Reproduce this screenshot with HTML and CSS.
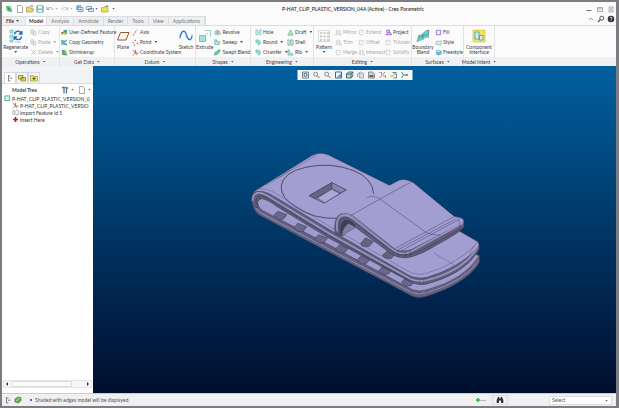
FILE: index.html
```html
<!DOCTYPE html>
<html lang="en">
<head>
<meta charset="utf-8">
<title>Creo Parametric</title>
<link rel="stylesheet" href="styles.css">
</head>
<body>
<svg class="defs" aria-hidden="true">
  <symbol id="page" viewBox="0 0 8 8"><path d="M1.500.5h3.500l1.500 1.500v5.500h-5z" fill="#fff" stroke="#888" stroke-width=".7"/></symbol>
  <symbol id="logo" viewBox="0 0 8 8"><path d="M1 1h4l2 2v4H3L1 5z" fill="#9ed6a4"/><path d="M1 1l6 6M2 4h4M4 1v5" stroke="#2f9b57" stroke-width=".9"/></symbol>
  <symbol id="open" viewBox="0 0 8 8"><path d="M.5 7V2h2.500l1 1h2v1H8L6.500 7z" fill="#e9d37a" stroke="#a98e2f" stroke-width=".6"/><path d="M4 1.500l2-.8 1.200 1" fill="none" stroke="#555" stroke-width=".7"/></symbol>
  <symbol id="save" viewBox="0 0 8 8"><rect x=".7" y=".7" width="6.600" height="6.600" rx=".8" fill="#7fc4bc" stroke="#5a9aa0" stroke-width=".6"/><path d="M2 1h4v2.500H2zM2 5h4v2H2z" fill="#eef9f7"/></symbol>
  <symbol id="undo" viewBox="0 0 8 8"><path d="M1 2v2.500h2.500M1.200 4.200C2.500 2 6.500 2 6.800 5" fill="none" stroke="#9aa6b8" stroke-width="1"/></symbol>
  <symbol id="redo" viewBox="0 0 8 8"><path d="M7 2v2.500H4.500M6.800 4.200C5.500 2 1.500 2 1.200 5" fill="none" stroke="#bcc3cd" stroke-width="1"/></symbol>
  <symbol id="regen" viewBox="0 0 8 8"><path d="M2 2.500h5v4H2z" fill="#d5e6f3" stroke="#5f93b8" stroke-width=".8"/><path d="M1 5V1h4.500M3.500 4.500h2" fill="none" stroke="#2467a4" stroke-width=".9"/></symbol>
  <symbol id="windows" viewBox="0 0 8 8"><path d="M.5 1.500h5v3h-5zM2.500 3.500h5v3h-5z" fill="#e9f0f6" stroke="#6c8ba6" stroke-width=".8"/></symbol>
  <symbol id="folder" viewBox="0 0 8 8"><path d="M.5 7V2.500h2l1-1H7V7z" fill="#f0de4b" stroke="#a89b35" stroke-width=".6"/><path d="M4.500 2l2.500-1.500" stroke="#777"/></symbol>
  <symbol id="regenbig" viewBox="0 0 14 14"><path d="M1 1h3v3H1zM1 6h3v3H1zM1 11h3v2H1z" fill="#b8ead9" stroke="#51b5a0" stroke-width=".6"/><path d="M5.500 5.500C6 1.500 11 1 12 4.500M12.800 2v3h-3M12.500 7.500c-.5 4-5.500 4-6.500 1M5.200 11V8h3" fill="none" stroke="#1f68c2" stroke-width="1.400"/><path d="M6 13h6" stroke="#aaa" stroke-width=".7"/></symbol>
  <symbol id="copy" viewBox="0 0 8 8"><path d="M1 1h3v4H1zM3.500 3h3v4h-3z" fill="#f4f4f4" stroke="#bbb" stroke-width=".8"/></symbol>
  <symbol id="cross" viewBox="0 0 8 8"><path d="M1.500 1.500l5 5M6.500 1.500l-5 5" stroke="#b5b5b5" stroke-width=".9"/></symbol>
  <symbol id="udf" viewBox="0 0 8 8"><path d="M3 1h4v5H3z" fill="#4bb8a6"/><path d="M1 3h4v4H1z" fill="#f0c95d"/><path d="M0 5l3-1.500" stroke="#333"/><path d="M4 2h2v2H4z" fill="#2474a4"/></symbol>
  <symbol id="geom" viewBox="0 0 8 8"><path d="M1 1l5 1-3 2 4 3-5-.5z" fill="#54c9bd"/><path d="M7 1L3 4l4 3M1 1v6" fill="none" stroke="#176f91" stroke-width=".9"/></symbol>
  <symbol id="shrink" viewBox="0 0 8 8"><path d="M.5 1h6.500v6H.5z" fill="#f3dc5e"/><path d="M1 1h3l3 5-4 1z" fill="#49bda8"/><path d="M2 1v5l5 1" fill="none" stroke="#37758f" stroke-width=".8"/></symbol>
  <symbol id="plane" viewBox="0 0 14 14"><path d="M4.500 3.500H13l-3 7.500H1.500z" fill="#fffaf6" stroke="#98562f" stroke-width="1"/></symbol>
  <symbol id="axis" viewBox="0 0 8 8"><path d="M1.500 7.500l1-1.800M3 5l1.500-2.700M5 1.500L5.600.5" stroke="#a45b38" stroke-width=".9"/></symbol>
  <symbol id="points" viewBox="0 0 8 8"><path d="M3 1.500h1.300M.8 4h1.300M5.500 5h1.300M2 7h1.300" stroke="#a3532b" stroke-width="1.300"/></symbol>
  <symbol id="csys" viewBox="0 0 8 8"><path d="M1 1l3 3.500L1 7.500M4 4.500h3.500M4 1v3.500l2 2.500" fill="none" stroke="#a5582f" stroke-width=".9"/></symbol>
  <symbol id="sketch" viewBox="0 0 14 14"><path d="M1 9C2.500 0 6 1 7.500 6s4 7 5.500 1" fill="none" stroke="#2472d8" stroke-width="1.300"/><path d="M1 10V6M7 8V4M13 9V5" stroke="#85aae0" stroke-width=".8"/></symbol>
  <symbol id="extrude" viewBox="0 0 14 14"><path d="M1.500 6.500h6v6h-6z" fill="#9ce5d9" stroke="#77c9bf"/><path d="M7 1.500h5.500V8M8 6l2-2" fill="none" stroke="#8fc8bf" stroke-width=".9"/></symbol>
  <symbol id="revolve" viewBox="0 0 8 8"><path d="M1 6V3l2-1v4zM5 2l2 1v3H5z" fill="#d4eee9" stroke="#6e9b98" stroke-width=".7"/><path d="M4 .5v7" stroke="#778" stroke-width=".6"/></symbol>
  <symbol id="sweep" viewBox="0 0 8 8"><path d="M1 1v5h5V3H3V1z" fill="#d7f4ed" stroke="#409a90" stroke-width=".8"/></symbol>
  <symbol id="blend" viewBox="0 0 8 8"><path d="M.5 7L1 4l5-3.500L7.500 2 4 6z" fill="#63c8ae" stroke="#389779" stroke-width=".6"/></symbol>
  <symbol id="hole" viewBox="0 0 8 8"><path d="M1 1v5.500h6V1H5v3H3V1z" fill="#c8eeee" stroke="#73bcb7" stroke-width=".7"/></symbol>
  <symbol id="round" viewBox="0 0 8 8"><path d="M1 1h2c2 0 3.500 2 3.500 4L4 7C4 5 3 4 1 4z" fill="#9ae0d0" stroke="#58ac9b" stroke-width=".6"/></symbol>
  <symbol id="draft" viewBox="0 0 8 8"><path d="M1 7l3-6 1.500 3L7 7z" fill="#b7e7ae" stroke="#57b692" stroke-width=".8"/></symbol>
  <symbol id="shell" viewBox="0 0 8 8"><path d="M1 1h2.500v6H1zM4.500 1H7v6H4.500z" fill="#d5efe8" stroke="#70a89f" stroke-width=".8"/></symbol>
  <symbol id="rib" viewBox="0 0 8 8"><path d="M1 1v6h6L6 5H3V1z" fill="#a4dfd5" stroke="#70b5ac" stroke-width=".7"/></symbol>
  <symbol id="pattern" viewBox="0 0 14 14"><path d="M1.500 1.500h11v11h-11z" fill="#fafafa" stroke="#ccc" stroke-width=".7"/><path d="M3 4h2M6.500 4h2M10 4h2M3 7.500h2M6.500 7.500h2M10 7.500h2M3 11h2M6.500 11h2M10 11h2" stroke="#bbb" stroke-width="1.600"/></symbol>
  <symbol id="mirror" viewBox="0 0 8 8"><path d="M2.500 1L1 6.500h2.500zM5 1v6h2.500z" fill="none" stroke="#c8c8c8" stroke-width=".8"/></symbol>
  <symbol id="corner" viewBox="0 0 8 8"><path d="M6.500 1.500h-5v5h5M4 3.500h3" fill="none" stroke="#c5c5c5" stroke-width=".8"/></symbol>
  <symbol id="project" viewBox="0 0 8 8"><path d="M1 6.500h6.500L6 4H3zM2 4V1.500l3-.5.500 2.500" fill="#e1caf4" stroke="#9752d1" stroke-width=".9"/></symbol>
  <symbol id="boundary" viewBox="0 0 14 14"><path d="M1 13l2-7c3 2 4-4 10-5l-1 8c-3-1-6 3-11 4z" fill="#62d6cd"/><path d="M1 13l2-7c3 2 4-4 10-5l-1 8M7 5v6M3 9l9-4" fill="none" stroke="#557f80" stroke-width=".7"/></symbol>
  <symbol id="fill" viewBox="0 0 8 8"><path d="M1.500 1.500h5v5h-5z" fill="#f0eaff" stroke="#805fd4" stroke-width=".9"/></symbol>
  <symbol id="style" viewBox="0 0 8 8"><path d="M.5 6l2-4 2 1 2.500-1v5z" fill="#dbeff3" stroke="#8eafb9" stroke-width=".8"/></symbol>
  <symbol id="free" viewBox="0 0 8 8"><path d="M1 2l3-1 3.500 1v4L4 7.500 1 6z" fill="#64b9dc"/><path d="M2 2.500l2-.8 2 .8-2 1z" fill="#dff4fb"/></symbol>
  <symbol id="component" viewBox="0 0 14 14"><path d="M1 1h12v12H1z" fill="#f1e45b" stroke="#c6b946" stroke-width=".6"/><path d="M3 3h4v7H3zM7.500 6.500H11V11H7.500z" fill="#d1f0ed" stroke="#479e9a" stroke-width=".8"/></symbol>
  <symbol id="tree" viewBox="0 0 8 8"><path d="M2.500 1v6M2.500 2h2M4 4.200h2.500M2.500 7h2" fill="none" stroke="#777" stroke-width=".9"/></symbol>
  <symbol id="layers" viewBox="0 0 8 8"><path d="M.5 1.500h4.500v3.500H.5zM3 3.500h4.500V7H3z" fill="#e8df58" stroke="#797326" stroke-width=".7"/></symbol>
  <symbol id="star" viewBox="0 0 8 8"><path d="M.5 7V1.500h3l.5 1h3.500V7z" fill="#eee867" stroke="#8c873c" stroke-width=".6"/><path d="M4 3v3M2.500 4.500h3" stroke="#635e18" stroke-width="1.200"/></symbol>
  <symbol id="hammer" viewBox="0 0 8 8"><path d="M1 1.500h3.500M3 2v5.500M5.500 1v6.500" fill="none" stroke="#57738f" stroke-width="1.300"/><path d="M6 1h1.500v2H6z" fill="#e99b48"/></symbol>
  <symbol id="part" viewBox="0 0 8 8"><path d="M1 1h5.500v5.500H1z" fill="#d3f4e8" stroke="#41a59a" stroke-width="1"/></symbol>
  <symbol id="feature" viewBox="0 0 8 8"><path d="M1 2h2.500v4H1zM4.500 1.500H7v5H4.500" fill="none" stroke="#819ba7" stroke-width=".8"/></symbol>
  <symbol id="insert" viewBox="0 0 8 8"><path d="M4 1.200v5.600M1.200 4h5.600" stroke="#c3122f" stroke-width="1.900"/></symbol>
  <symbol id="glass" viewBox="0 0 8 8"><circle cx="3.200" cy="3.200" r="2" fill="#edf4f7" stroke="#667a86" stroke-width=".8"/><path d="M4.800 4.800L7 7" stroke="#806a4d"/></symbol>
  <symbol id="fit" viewBox="0 0 8 8"><path d="M1 1h6v6H1z" fill="#dce8f0" stroke="#4b718c" stroke-width=".8"/><circle cx="4" cy="3.800" r="1.500" fill="#fff" stroke="#456"/></symbol>
  <symbol id="repaint" viewBox="0 0 8 8"><path d="M1 1h6v6H1z" fill="#fff" stroke="#3568a0"/><path d="M1.500 6.500l5-4v4z" fill="#58a0df"/></symbol>
  <symbol id="cube" viewBox="0 0 8 8"><path d="M1 3l2-2h4.500v4L5.500 7H1z" fill="#c0d9dd" stroke="#244d5c" stroke-width=".8"/><path d="M1 3h4.500v4M5.500 3l2-2" fill="none" stroke="#244d5c" stroke-width=".8"/></symbol>
  <symbol id="views" viewBox="0 0 8 8"><path d="M3 2h4v5H3z" fill="#ddd" stroke="#999" stroke-width=".7"/><path d="M1 3l3-2M1 3v3" stroke="#6f8c9d" stroke-width=".8"/></symbol>
  <symbol id="manager" viewBox="0 0 8 8"><path d="M1 1h4l2 2v4H1z" fill="#d4d2c5" stroke="#666" stroke-width=".7"/><path d="M2 4h4v2H2z" fill="#556873"/></symbol>
  <symbol id="datums" viewBox="0 0 8 8"><path d="M1 7l5.500-6M1 1.500h2v2M4.500 5h2.500v2" fill="none" stroke="#b07c5b" stroke-width=".9"/></symbol>
  <symbol id="notes" viewBox="0 0 8 8"><path d="M3 1.500h4M4 3h3v4H4" fill="none" stroke="#607477" stroke-width=".9"/><path d="M1 5h3" stroke="#d1b431" stroke-width="1.300"/></symbol>
  <symbol id="spin" viewBox="0 0 8 8"><path d="M1 1l2 3-2 3M3 4h2" fill="none" stroke="#20a184"/><path d="M5 4h2.500" stroke="#d34242" stroke-width="1.400"/></symbol>
  <symbol id="leaf" viewBox="0 0 8 8"><path d="M1 3l3-2 3 .5v3L4.500 7 1 6z" fill="#67a852" stroke="#32743a" stroke-width=".6"/><path d="M2 5l4-3" stroke="#d5edb4" stroke-width=".7"/></symbol>
  <symbol id="binocular" viewBox="0 0 8 8"><path d="M.7 7V4L2 1h1.300v1.500h1.400V1H6l1.300 3v3H5V4.500H3V7z" fill="#333"/></symbol>
  <symbol id="min" viewBox="0 0 8 8"><path d="M1.500 5.500h5" stroke="#777"/></symbol>
  <symbol id="max" viewBox="0 0 8 8"><path d="M1.500 2.500h5v4h-5zM1.500 4h5" fill="none" stroke="#999" stroke-width=".8"/></symbol>
  <symbol id="close" viewBox="0 0 8 8"><path d="M2 2h4v5H2zM2 2l4 5M6 2L2 7" fill="none" stroke="#999" stroke-width=".7"/></symbol>
  <symbol id="up" viewBox="0 0 8 8"><path d="M2 5l2-2 2 2" fill="none" stroke="#888" stroke-width=".8"/></symbol>
  <symbol id="search" viewBox="0 0 8 8"><circle cx="4.800" cy="3.200" r="2" fill="none" stroke="#444" stroke-width=".9"/><path d="M3.300 4.700L1 7" stroke="#444" stroke-width="1.200"/></symbol>
  <symbol id="help" viewBox="0 0 8 8"><circle cx="4" cy="4" r="3.300" fill="#333"/><path d="M3 3.200c0-1.300 2.200-1.300 2 0-.1.700-1 .7-1 1.400M4 5.300v.8" fill="none" stroke="#fff" stroke-width=".8"/></symbol>
</svg>

<div class="window">
  <header class="title-bar">
    <div class="quick">
      <svg class="icon app"><use href="#logo"/></svg>
      <button aria-label="New"><svg class="icon"><use href="#page"/></svg></button>
      <button aria-label="Open"><svg class="icon"><use href="#open"/></svg></button>
      <button aria-label="Save"><svg class="icon"><use href="#save"/></svg></button>
      <button aria-label="Undo"><svg class="icon"><use href="#undo"/></svg><i class="caret dim"></i></button>
      <button aria-label="Redo"><svg class="icon"><use href="#redo"/></svg><i class="caret dim"></i></button>
      <button aria-label="Regenerate"><svg class="icon"><use href="#regen"/></svg></button>
      <button aria-label="Windows"><svg class="icon"><use href="#windows"/></svg><i class="caret"></i></button>
      <button aria-label="Close window"><svg class="icon"><use href="#folder"/></svg></button>
      <button aria-label="Customize"><i class="caret"></i></button>
    </div>
    <h1>P-HAT_CLIP_PLASTIC_VERSION_04A (Active) - Creo Parametric</h1>
    <div class="controls">
      <button aria-label="Minimize"><svg class="icon"><use href="#min"/></svg></button>
      <button aria-label="Maximize"><svg class="icon"><use href="#max"/></svg></button>
      <button aria-label="Close"><svg class="icon"><use href="#close"/></svg></button>
    </div>
  </header>

  <div class="tab-row">
    <nav class="tabs">
      <button class="file">File<i class="caret"></i></button>
      <button class="active">Model</button>
      <button>Analysis</button>
      <button>Annotate</button>
      <button>Render</button>
      <button>Tools</button>
      <button>View</button>
      <button>Applications</button>
    </nav>
    <div class="helpers">
      <button aria-label="Collapse ribbon"><svg class="icon"><use href="#up"/></svg></button>
      <button aria-label="Search"><svg class="icon"><use href="#search"/></svg></button>
      <button aria-label="Help"><svg class="icon"><use href="#help"/></svg></button>
    </div>
  </div>

  <div class="ribbon">
    <section class="group operations">
      <div class="tools">
        <button class="big"><svg><use href="#regenbig"/></svg><span>Regenerate</span><i class="caret"></i></button>
        <div class="stack off">
          <button><svg class="icon"><use href="#copy"/></svg>Copy</button>
          <button><svg class="icon"><use href="#copy"/></svg>Paste<i class="caret"></i></button>
          <button><svg class="icon"><use href="#cross"/></svg>Delete<i class="caret"></i></button>
        </div>
      </div>
      <button class="name">Operations<i class="caret"></i></button>
    </section>
    <section class="group getdata">
      <div class="tools">
        <div class="stack">
          <button><svg class="icon"><use href="#udf"/></svg>User-Defined Feature</button>
          <button><svg class="icon"><use href="#geom"/></svg>Copy Geometry</button>
          <button><svg class="icon"><use href="#shrink"/></svg>Shrinkwrap</button>
        </div>
      </div>
      <button class="name">Get Data<i class="caret"></i></button>
    </section>
    <section class="group datum">
      <div class="tools">
        <button class="big"><svg><use href="#plane"/></svg><span>Plane</span></button>
        <div class="stack">
          <button><svg class="icon"><use href="#axis"/></svg>Axis</button>
          <button><svg class="icon"><use href="#points"/></svg>Point<i class="caret"></i></button>
          <button><svg class="icon"><use href="#csys"/></svg>Coordinate System</button>
        </div>
        <button class="big"><svg><use href="#sketch"/></svg><span>Sketch</span></button>
      </div>
      <button class="name">Datum<i class="caret"></i></button>
    </section>
    <section class="group shapes">
      <div class="tools">
        <button class="big"><svg><use href="#extrude"/></svg><span>Extrude</span></button>
        <div class="stack">
          <button><svg class="icon"><use href="#revolve"/></svg>Revolve</button>
          <button><svg class="icon"><use href="#sweep"/></svg>Sweep<i class="caret"></i></button>
          <button><svg class="icon"><use href="#blend"/></svg>Swept Blend</button>
        </div>
      </div>
      <button class="name">Shapes<i class="caret"></i></button>
    </section>
    <section class="group engineering">
      <div class="tools">
        <div class="stack">
          <button><svg class="icon"><use href="#hole"/></svg>Hole</button>
          <button><svg class="icon"><use href="#round"/></svg>Round<i class="caret"></i></button>
          <button><svg class="icon"><use href="#round"/></svg>Chamfer<i class="caret"></i></button>
        </div>
        <div class="stack">
          <button><svg class="icon"><use href="#draft"/></svg>Draft<i class="caret"></i></button>
          <button><svg class="icon"><use href="#shell"/></svg>Shell</button>
          <button><svg class="icon"><use href="#rib"/></svg>Rib<i class="caret"></i></button>
        </div>
      </div>
      <button class="name">Engineering<i class="caret"></i></button>
    </section>
    <section class="group editing">
      <div class="tools">
        <button class="big"><svg><use href="#pattern"/></svg><span>Pattern</span><i class="caret"></i></button>
        <div class="stack off">
          <button><svg class="icon"><use href="#mirror"/></svg>Mirror</button>
          <button><svg class="icon"><use href="#mirror"/></svg>Trim</button>
          <button><svg class="icon"><use href="#corner"/></svg>Merge</button>
        </div>
        <div class="stack off">
          <button><svg class="icon"><use href="#corner"/></svg>Extend</button>
          <button><svg class="icon"><use href="#corner"/></svg>Offset</button>
          <button><svg class="icon"><use href="#mirror"/></svg>Intersect</button>
        </div>
        <div class="stack">
          <button><svg class="icon"><use href="#project"/></svg>Project</button>
          <button class="off"><svg class="icon"><use href="#corner"/></svg>Thicken</button>
          <button class="off"><svg class="icon"><use href="#corner"/></svg>Solidify</button>
        </div>
      </div>
      <button class="name">Editing<i class="caret"></i></button>
    </section>
    <section class="group surfaces">
      <div class="tools">
        <button class="big"><svg><use href="#boundary"/></svg><span>Boundary<br>Blend</span></button>
        <div class="stack">
          <button><svg class="icon"><use href="#fill"/></svg>Fill</button>
          <button><svg class="icon"><use href="#style"/></svg>Style</button>
          <button><svg class="icon"><use href="#free"/></svg>Freestyle</button>
        </div>
      </div>
      <button class="name">Surfaces<i class="caret"></i></button>
    </section>
    <section class="group intent">
      <div class="tools">
        <button class="big"><svg><use href="#component"/></svg><span>Component<br>Interface</span></button>
      </div>
      <button class="name">Model Intent<i class="caret"></i></button>
    </section>
    <div class="rest"></div>
  </div>

  <main class="work">
    <aside class="side">
      <div class="side-tabs">
        <button class="current" aria-label="Model tree"><svg class="icon"><use href="#tree"/></svg></button>
        <button aria-label="Folder browser"><svg class="icon"><use href="#layers"/></svg></button>
        <button aria-label="Favorites"><svg class="icon"><use href="#star"/></svg></button>
      </div>
      <div class="side-head">
        <h2>Model Tree</h2>
        <button aria-label="Settings"><svg class="icon"><use href="#hammer"/></svg><i class="caret"></i></button>
        <button aria-label="Show"><svg class="icon"><use href="#page"/></svg><i class="caret"></i></button>
      </div>
      <ul class="model-tree">
        <li class="root"><svg class="icon"><use href="#part"/></svg>P-HAT_CLIP_PLASTIC_VERSION_0</li>
        <li><svg class="icon"><use href="#csys"/></svg>P-HAT_CLIP_PLASTIC_VERSIO</li>
        <li><svg class="icon"><use href="#feature"/></svg>Import Feature id 5</li>
        <li><svg class="icon"><use href="#insert"/></svg>Insert Here</li>
      </ul>
      <div class="scroll"><i class="arrow left"></i><div class="thumb"></div><i class="arrow right"></i></div>
    </aside>

    <div class="canvas">
      <svg class="model" viewBox="93 66 522 327" role="img" aria-label="Shaded clip model">
        <g transform="translate(245 148) scale(.3333)" fill="none" stroke="#35344f" stroke-width="1.600" stroke-linejoin="round">
          <!-- lower leg of the loop -->
          <path d="M18 150Q18 185 42 202L230 302L410 397L500 445Q520 453 545 445Q650 412 695 355Q706 340 702 322L600 280L60 140Z" fill="#63617f"/>
          <path d="M36 160Q36 178 52 188L240 285L420 382L500 425Q520 433 545 425Q655 396 701 324L600 270L60 140Z" fill="#9f9bcd"/>
          <path d="M28 172Q32 188 50 197L235 295L415 390L500 434Q520 442 545 434Q655 402 700 338" stroke="#908cb8" stroke-width="3"/>
          <g fill="#6a678b" stroke-width="1.500">
            <path d="M85 202l12-12 27 10-10 13-16 2z"/>
            <path d="M145 239l12-13 27 10-10 13-16 2z"/>
            <path d="M207 273l12-13 27 10-10 13-16 2z"/>
            <path d="M270 303l12-13 27 10-10 13-16 2z"/>
            <path d="M335 336l12-13 27 10-10 13-16 2z"/>
            <path d="M400 368l12-13 27 10-10 13-16 2z"/>
            <path d="M468 403l12-13 27 10-10 13-16 2z"/>
          </g>
          <!-- upper leg edge and bend -->
          <path d="M18 160Q14 132 40 122L695 282Q706 295 698 310Q655 378 548 407Q520 414 495 402L250 270L95 176Q60 150 43 152Q32 158 38 180Q22 178 18 160Z" fill="#615e7d"/>
          <path d="M22 158Q20 134 44 134Q60 138 85 155L250 256L495 393Q520 403 546 396Q650 370 698 298" stroke="#9995c0" stroke-width="5"/>
          <path d="M33 172Q26 143 48 143Q62 148 90 166L250 263L495 399" stroke="#3b3956" stroke-width="2"/>
          <!-- upper face -->
          <path d="M22 140Q25 128 42 120L200 22Q222 10 248 20L432 112L640 248L695 280Q706 289 695 302Q640 360 545 388Q515 395 490 382L250 244L82 143Q60 128 35 130Q25 132 22 140Z" fill="#a29ed1"/>
          <path d="M35 124Q62 118 90 136L250 234L490 371Q515 383 543 376Q630 350 686 294M60 113L215 20M138 65L92 93M565 315L630 353M695 282L670 317M522 388V410M535 388V410M500 428V445M522 432V450M545 427V444" stroke="#55527a" stroke-width="1.300"/>
          <path d="M275 211Q205 213 155 180Q105 150 107 115Q112 73 180 58Q255 41 325 68Q380 90 385 138" stroke="#38364f" stroke-width="2.400"/>
          <!-- square recess -->
          <path d="M191 143L259 104L302 126L235 166Z" fill="#8f8bb8"/>
          <path d="M191 143L259 104V120L210 152Z" fill="#666383"/>
          <path d="M259 104V122L284 135L302 126Z" fill="#8985b1"/>
          <path d="M215 150L259 124L284 136L238 164Z" fill="#aba7da"/>
          <!-- spring arm -->
          <g fill="#65627f" stroke-width="1.500">
            <path d="M345 287l15-18 24 12-14 15-20-1z"/>
            <path d="M410 322l15-12 24 9-12 13-18-2z"/>
          </g>
          <path d="M268 250Q265 206 288 197Q305 192 325 207L455 305L655 215L656 237Q645 252 575 290Q520 324 486 329Q458 331 438 318L325 234Q300 213 291 228Q285 240 292 263Q275 263 268 250Z" fill="#605d7c"/>
          <path d="M286 258Q283 225 298 217Q312 213 330 233L305 241L292 263Z" fill="#403e56"/>
          <path d="M289 259Q292 239 309 226L331 238L305 253L292 263Z" fill="#817ea3" stroke-width="1"/>
          <path d="M280 207L290 197L365 151L432 112L460 97Q482 89 505 105L626 205L646 209Q655 212 655 222L500 302Q470 313 448 303L325 209Q302 193 280 207Z" fill="#a29ed1" stroke="none"/>
          <path d="M432 112L460 97Q482 89 505 105L626 205L646 209Q655 212 655 222" stroke-width="1.500"/>
          <path d="M276 250Q269 215 286 205Q302 196 325 214L445 307Q470 325 500 309L653 225" stroke="#9995bf" stroke-width="5"/>
          <path d="M284 260Q277 220 294 211Q309 205 329 224L440 311Q462 324 488 321Q520 316 650 240M290 199Q306 192 326 206L448 303" stroke="#3c3a55" stroke-width="1.600"/>
          <path d="M315 203L405 152L495 103M365 149Q382 138 405 154L537 250Q550 260 585 262M448 302L625 206M456 306L636 210M466 309L645 212" stroke="#45436a" stroke-width="1.500"/>
          <path d="M458 307V328M480 312V329M494 308V327M640 216L645 244" stroke-width="1.200"/>
        </g>
      </svg>
      <div class="view-bar">
        <button aria-label="Refit"><svg class="icon"><use href="#fit"/></svg></button>
        <button aria-label="Zoom in"><svg class="icon"><use href="#glass"/></svg></button>
        <button aria-label="Zoom out"><svg class="icon"><use href="#glass"/></svg></button>
        <button aria-label="Repaint"><svg class="icon"><use href="#repaint"/></svg></button>
        <button aria-label="Display style"><svg class="icon"><use href="#cube"/></svg></button>
        <button aria-label="Saved orientations"><svg class="icon"><use href="#views"/></svg></button>
        <button aria-label="View manager"><svg class="icon"><use href="#manager"/></svg></button>
        <button aria-label="Datum display"><svg class="icon"><use href="#datums"/></svg></button>
        <button aria-label="Annotation display"><svg class="icon"><use href="#notes"/></svg></button>
        <button aria-label="Spin center"><svg class="icon"><use href="#spin"/></svg></button>
      </div>
    </div>
  </main>

  <footer class="status">
    <button aria-label="Toggle tree"><svg class="icon"><use href="#tree"/></svg></button>
    <button aria-label="Toggle browser"><svg class="icon"><use href="#leaf"/></svg></button>
    <p>Shaded with edges model will be displayed.</p>
    <i class="ready"></i>
    <button class="find" aria-label="Find"><svg class="icon"><use href="#binocular"/></svg></button>
    <div class="picker"><select aria-label="Selection filter"><option>Select</option></select><i class="caret"></i></div>
  </footer>
</div>
</body>
</html>
```

FILE: styles.css
```css
* { box-sizing: border-box; }

body {
  margin: 0;
  font: 5px/6px Lato, "Liberation Sans", sans-serif;
  color: #444;
}

button {
  display: flex;
  align-items: center;
  margin: 0;
  padding: 0;
  border: 0;
  background: none;
  font: inherit;
  color: inherit;
  white-space: nowrap;
}

h1, h2, p, ul { margin: 0; padding: 0; font: inherit; }

.defs { position: absolute; width: 0; height: 0; }
.icon { width: 8px; height: 8px; flex: none; }

.caret {
  width: 3px;
  height: 2px;
  margin-left: 3px;
  flex: none;
  background: #555;
  clip-path: polygon(0 0, 100% 0, 50% 100%);
}
.dim, .off .caret { background: #aaa; }

.window {
  display: flex;
  flex-direction: column;
  height: 100vh;
  border: 2px solid #7d7c80;
  border-right-width: 3px;
  background: #fbfbfc;
}

.title-bar {
  display: grid;
  grid-template-columns: 1fr auto 1fr;
  align-items: center;
  height: 13px;
  padding: 0 1px 0 3px;
}
.title-bar h1 { color: #222; padding-left: 86px; font-weight: 500; }
.quick { display: flex; align-items: center; gap: 2px; }
.app { margin-right: 1px; }
.quick .caret { margin: 0 1px; }
.controls, .helpers { display: flex; gap: 3px; justify-content: flex-end; }

.tab-row { display: flex; justify-content: space-between; align-items: flex-end; height: 10px; padding-right: 1px; }
.helpers { gap: 2px; align-self: flex-start; }
.tabs { display: flex; height: 9px; border: 1px solid #dcdde1; border-width: 1px 1px 0 0; background: #eeeff2; color: #777; }
.tabs button { padding: 0 4px; border-right: 1px solid #dcdde1; }
.tabs .file { padding: 0 6px 0 4px; font-weight: bold; color: #444; }
.tabs .file .caret { margin-left: 2px; }
.tabs .active { padding: 0 3px; background: #fff; font-weight: bold; color: #333; }

.ribbon { display: flex; height: 41px; border-top: 1px solid #dcdde1; }
.group { display: flex; flex-direction: column; flex: none; border-right: 1px solid #e2e3e7; }
.tools { display: flex; flex: 1; padding-top: 1px; }
.name { justify-content: center; height: 9px; background: #eef0f2; color: #444; }
.rest { flex: 1; background: linear-gradient(#fbfbfc 31px, #eef0f2 31px); }

.operations { width: 58px; }
.getdata { width: 55px; }
.datum { width: 81px; }
.shapes { width: 55px; }
.engineering { width: 63px; padding-left: 3px; }
.engineering .stack { width: 32px; }
.engineering .name { margin-left: -3px; }
.editing { width: 98px; }
.editing .stack { width: 23px; }
.editing .stack:nth-child(3) { width: 27px; }
.surfaces { width: 52px; }
.intent { width: 31px; }

.big { flex-direction: column; width: 30px; padding-top: 2px; line-height: 5px; text-align: center; }
.big svg { width: 14px; height: 14px; margin-bottom: 2px; flex: none; }
.big .caret { margin: 1px 0 0; }
.datum .big { width: 16px; }
.datum .stack { width: 47px; }
.shapes .big { width: 20px; }
.editing .big { width: 20px; }
.surfaces .big { width: 23px; }
.stack { display: flex; flex-direction: column; padding-left: 1px; }
.stack button { height: 10px; gap: 1px; }
.stack .icon { width: 7px; height: 7px; }
.stack .caret { margin-left: 2px; }
.off { color: #aaa; }

.work { display: flex; flex: 1; min-height: 0; }
.side { display: flex; flex-direction: column; width: 91px; flex: none; background: #fff; overflow: hidden; }
.side-tabs { display: flex; height: 18px; padding: 6px 0 0 2px; background: #f2f3f5; border-bottom: 1px solid #dcdde1; }
.side-tabs button { padding: 0 1px; border: 1px solid #d5d7dc; border-bottom: 0; }
.side-tabs .current { background: #fff; }
.side-head { display: flex; align-items: center; gap: 4px; height: 11px; padding-right: 2px; }
.side-head h2 { flex: 1; padding-left: 10px; font-weight: bold; }
.side-head .caret { margin-left: 2px; }
.model-tree { flex: 1; list-style: none; color: #333; }
.model-tree li { display: flex; align-items: center; gap: 1px; height: 7px; padding-left: 10px; white-space: nowrap; }
.model-tree .root { padding-left: 2px; }
.model-tree .icon { width: 7px; height: 7px; }
.scroll { display: flex; align-items: center; gap: 3px; height: 8px; margin: 0 1px 5px; padding: 0 2px; border: 1px solid #e4e5e9; background: #f6f6f8; }
.thumb { flex: 1; height: 6px; margin-right: 12px; border: 1px solid #d9dbe0; border-radius: 1px; background: #fafafa; }
.arrow { width: 2px; height: 4px; background: #333; }
.left { clip-path: polygon(100% 0, 100% 100%, 0 50%); }
.right { clip-path: polygon(0 0, 0 100%, 100% 50%); }

.canvas { position: relative; flex: 1; min-width: 0; background: linear-gradient(#00609f, #004478 35%, #00254f 70%, #000f2e); }
.model { display: block; width: 100%; height: 100%; }
.view-bar { position: absolute; top: 4px; left: 50%; display: flex; gap: 3px; padding: 1px 4px; transform: translateX(-50%); background: #f4f5f7; }

.status { display: flex; align-items: center; gap: 2px; height: 13px; padding: 0 4px 0 2px; border-top: 1px solid #ccc; background: #f0f0f1; }
.status p { position: relative; flex: 1; padding-left: 11px; color: #555; }
.status p::before { content: ""; position: absolute; left: 6px; top: 2px; width: 2px; height: 2px; border-radius: 1px; background: #22d; }
.ready { width: 10px; height: 4px; margin-right: 4px; background: radial-gradient(circle at 2px 2px, #3fc65a 2px, transparent 2px), linear-gradient(#bbb, #bbb) 4px 2px / 6px 1px no-repeat; }
.find { margin-right: 39px; padding: 0 3px; border: 1px solid #ddd; }
.picker { position: relative; width: 63px; height: 9px; border: 1px solid #ddd; background: #fff; }
.picker select { display: block; width: 100%; height: 7px; padding: 0 2px; border: 0; appearance: none; background: none; font: inherit; color: #555; }
.picker .caret { position: absolute; right: 3px; top: 3px; pointer-events: none; }
```
